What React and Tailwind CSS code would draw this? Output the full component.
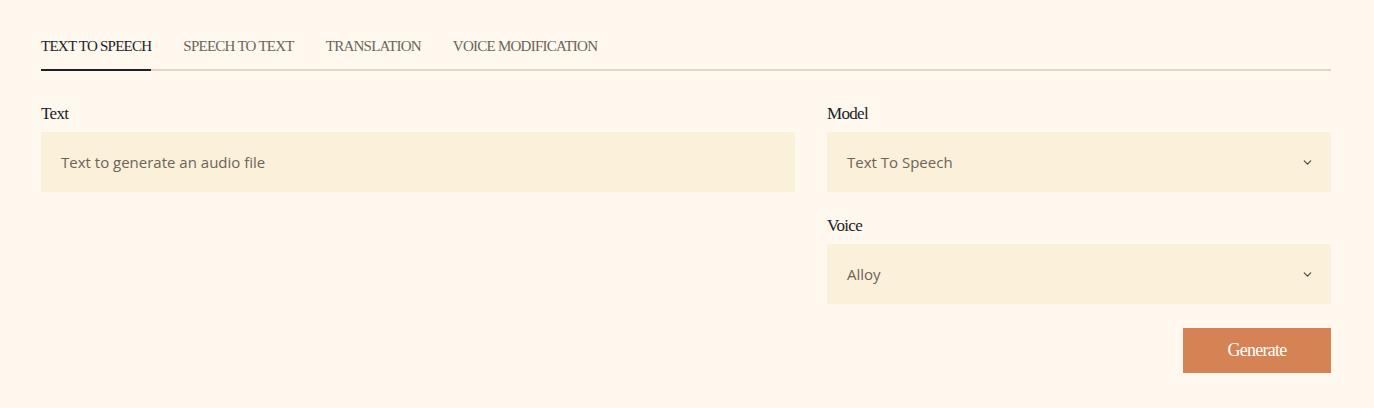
import { ChevronDown } from 'lucide-react'

const tabs = ['Text to Speech', 'Speech to Text', 'Translation', 'Voice Modification']

const serif = { fontFamily: '"Liberation Serif", "DejaVu Serif", serif' }

function Label({ children }) {
  return (
    <label className="block text-[17px] leading-6 text-[#1c2127] tracking-[-0.04em] mb-[6px] font-['Liberation_Serif',serif]">
      {children}
    </label>
  )
}

function Select({ value }) {
  return (
    <div className="h-[60px] bg-[#fbf0da] flex items-center justify-between pl-5 pr-[17px] text-[15px] text-[#6b6459] font-['Open_Sans',sans-serif]">
      <span>{value}</span>
      <ChevronDown size={13} strokeWidth={2.25} className="text-[#4f4a43]" />
    </div>
  )
}

export default function App() {
  return (
    <div className="min-h-[408px] bg-[#fef8ee] pl-[41px] pr-[43px] pt-[34px] pb-8 font-['Open_Sans',sans-serif]">
      <div className="flex gap-8 border-b-2 border-[#e5d5c6]">
        {tabs.map((t, i) => (
          <button
            key={t}
            className={
              'uppercase text-[15px] leading-6 tracking-[-0.05em] pb-[11px] -mb-[2px] border-b-2 font-[\'Liberation_Serif\',serif] ' +
              (i === 0 ? 'border-[#1c2127] text-[#1c2127]' : 'border-transparent text-[#6a665a]')
            }
          >
            {t}
          </button>
        ))}
      </div>

      <div className="grid grid-cols-[1fr_504px] gap-8 mt-[31px]">
        <div>
          <Label>Text</Label>
          <div className="h-[60px] bg-[#fbf0da] flex items-center px-5 text-[15px] text-[#6b6459]">
            Text to generate an audio file
          </div>
        </div>
        <div>
          <Label>Model</Label>
          <Select value="Text To Speech" />
          <div className="mt-[22px]">
            <Label>Voice</Label>
            <Select value="Alloy" />
          </div>
          <div className="flex justify-end mt-6">
            <button
              style={serif}
              className="w-[148px] h-[45px] bg-[#d58354] text-white text-[18px] tracking-[-0.04em]"
            >
              Generate
            </button>
          </div>
        </div>
      </div>
    </div>
  )
}
